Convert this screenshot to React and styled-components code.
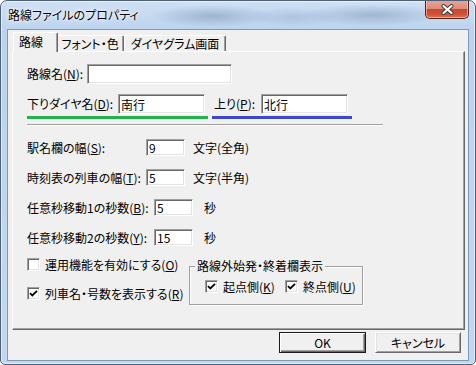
import React from 'react';
import styled, { createGlobalStyle } from 'styled-components';

const Global = createGlobalStyle`
  html, body { margin: 0; padding: 0; background: #ffffff; }
  body {
    width: 476px; height: 365px; overflow: hidden;
    font-family: "Noto Sans CJK JP", "Noto Sans", sans-serif;
    font-size: 12px;
    font-feature-settings: "palt";
    color: #000;
  }
  * { box-sizing: border-box; }
`;

const Window = styled.div`
  width: 476px;
  height: 365px;
  display: flex;
  flex-direction: column;
  border: 1px solid #4e6079;
  border-radius: 7px 7px 5px 5px;
  overflow: hidden;
  background:
    radial-gradient(ellipse 62px 11px at 212px 15px, rgba(70, 100, 140, 0.32), transparent),
    radial-gradient(ellipse 48px 10px at 292px 16px, rgba(90, 120, 160, 0.22), transparent),
    radial-gradient(ellipse 70px 11px at 372px 14px, rgba(70, 100, 140, 0.3), transparent),
    linear-gradient(#cfe0f4, #bcd3ee 30px, #c2d8f1);
  box-shadow: inset 0 0 0 1px rgba(255, 255, 255, 0.55);
`;

const TitleBar = styled.div`
  height: 28px;
  flex: none;
  display: flex;
  align-items: flex-start;
  justify-content: space-between;
  padding-left: 7px;
  padding-right: 6px;
`;

const TitleText = styled.div`
  font-family: "Meiryo UI", "Noto Sans CJK JP", sans-serif;
  font-size: 12px;
  line-height: 14px;
  margin-top: 7px;
  color: #000;
  text-shadow: 0 0 6px #ffffff, 0 0 3px #ffffff, 0 0 1px rgba(255,255,255,0.9);
`;

const CloseButton = styled.div`
  width: 44px;
  height: 19px;
  margin-top: -1px;
  display: flex;
  align-items: center;
  justify-content: center;
  border: 1px solid #5a1f17;
  border-top: none;
  border-radius: 0 0 5px 5px;
  background:
    linear-gradient(#e6a797 0%, #dc8d7a 48%, #c9452f 52%, #cf5238 80%, #e07757 100%);
  box-shadow: inset 0 0 0 1px rgba(255, 220, 210, 0.55);
`;

const Client = styled.div`
  flex: 1;
  margin: 0 6px 3px 6px;
  border: 1px solid #7f98b6;
  background: #f0f0f0;
  display: flex;
  flex-direction: column;
  padding: 2px 3px 0 4px;
`;

const TabStrip = styled.div`
  height: 19px;
  display: flex;
  align-items: flex-end;
  padding-left: 1px;
`;

const Tab = styled.div`
  height: ${p => (p.$active ? 20 : 16)}px;
  width: ${p => p.$w}px;
  margin-bottom: ${p => (p.$active ? -1 : 0)}px;
  margin-right: ${p => (p.$active ? -2 : 0)}px;
  position: relative;
  z-index: ${p => (p.$active ? 1 : 0)};
  background: #f0f0f0;
  border-left: 1px solid #ffffff;
  border-top: 1px solid #ffffff;
  border-right: 1px solid #696969;
  border-radius: 2px 2px 0 0;
  box-shadow: inset -1px 0 0 #a0a0a0;
  display: flex;
  align-items: center;
  justify-content: ${p => (p.$active ? 'flex-start' : 'center')};
  padding-left: ${p => (p.$active ? 5 : 0)}px;
  padding-bottom: ${p => (p.$active ? 2 : 0)}px;
  font-size: 12px;
  line-height: 14px;
  white-space: nowrap;
`;

const Panel = styled.div`
  height: 279px;
  background: #f0f0f0;
  border-top: 1px solid #ffffff;
  border-left: 1px solid #ffffff;
  border-right: 1px solid #696969;
  border-bottom: 1px solid #696969;
  box-shadow: inset -1px -1px 0 #a0a0a0;
  padding: 12px 0 0 14px;
  display: flex;
  flex-direction: column;
`;

const Row = styled.div`
  display: flex;
  align-items: center;
  height: ${p => p.$h || 20}px;
  margin-top: ${p => p.$mt || 0}px;
  padding-left: ${p => p.$pl || 0}px;
`;

const Label = styled.div`
  width: ${p => p.$w}px;
  flex: none;
  font-size: 12px;
  line-height: 14px;
  white-space: nowrap;
`;

const TextBox = styled.input`
  width: ${p => p.$w}px;
  height: ${p => p.$h || 20}px;
  flex: none;
  margin: 0;
  padding: 0 0 0 2px;
  font: inherit;
  font-size: 12px;
  line-height: 14px;
  color: #000;
  background: #ffffff;
  border: 1px solid;
  border-color: #a0a0a0 #ffffff #ffffff #a0a0a0;
  box-shadow: inset 1px 1px 0 #696969, inset -1px -1px 0 #e3e3e3;
  outline: none;
`;

const Unit = styled.div`
  margin-left: ${p => p.$ml}px;
  font-size: 12px;
  line-height: 14px;
  white-space: nowrap;
`;

const NameGroups = styled.div`
  display: flex;
  gap: 4px;
  margin-top: 10px;
`;

const NameGroup = styled.div`
  width: ${p => p.$w}px;
  display: flex;
  flex-direction: column;
`;

const ColorBar = styled.div`
  height: 3px;
  margin-top: 2px;
  background: ${p => p.$color};
`;

const Separator = styled.div`
  width: 356px;
  height: 2px;
  margin-top: 5px;
  border-top: 1px solid #a0a0a0;
  border-bottom: 1px solid #ffffff;
`;

const Bottom = styled.div`
  display: flex;
  align-items: flex-start;
  margin-top: 12px;
`;

const CheckColumn = styled.div`
  width: 162px;
  display: flex;
  flex-direction: column;
  gap: 16px;
`;

const CheckItem = styled.div`
  display: flex;
  align-items: center;
  gap: 5px;
  height: 13px;
  width: ${p => (p.$w ? `${p.$w}px` : 'auto')};
  flex: none;
  font-size: 12px;
  line-height: 14px;
  white-space: nowrap;
`;

const Box = styled.span`
  width: 13px;
  height: 13px;
  flex: none;
  display: flex;
  align-items: center;
  justify-content: center;
  background: #ffffff;
  border: 1px solid;
  border-color: #a0a0a0 #ffffff #ffffff #a0a0a0;
  box-shadow: inset 1px 1px 0 #696969, inset -1px -1px 0 #e3e3e3;
`;

const GroupBox = styled.div`
  width: 174px;
  height: 39px;
  margin-top: 8px;
  border: 1px solid #a0a0a0;
  box-shadow: 1px 1px 0 #ffffff, inset 1px 1px 0 #ffffff;
  display: flex;
  flex-direction: column;
  align-items: flex-start;
`;

const Legend = styled.div`
  margin-top: -8px;
  margin-left: 5px;
  padding: 0 2px;
  background: #f0f0f0;
  font-size: 12px;
  line-height: 14px;
  white-space: nowrap;
`;

const GroupChecks = styled.div`
  display: flex;
  margin-top: 7px;
  padding-left: 15px;
`;

const ButtonRow = styled.div`
  display: flex;
  justify-content: flex-end;
  gap: 9px;
  margin-top: 2px;
  padding-right: 4px;
`;

const Button = styled.div`
  width: ${p => p.$w}px;
  height: 21px;
  display: flex;
  align-items: center;
  justify-content: center;
  font-size: 12px;
  line-height: 14px;
  background: #f0f0f0;
  border: 1px solid;
  border-color: ${p => (p.$default ? '#1b1b1b' : '#ffffff #696969 #696969 #ffffff')};
  box-shadow: ${p =>
    p.$default
      ? 'inset 1px 1px 0 #ffffff, inset -1px -1px 0 #696969, inset -2px -2px 0 #a0a0a0'
      : 'inset 1px 1px 0 #e3e3e3, inset -1px -1px 0 #a0a0a0'};
`;

const Check = () => (
  <svg width="9" height="9" viewBox="0 0 9 9">
    <polyline points="1,4.2 3.3,6.5 8,1.8" fill="none" stroke="#000" strokeWidth="1.8" />
  </svg>
);

const CheckBox = ({ checked, children, w }) => (
  <CheckItem $w={w}>
    <Box>{checked && <Check />}</Box>
    <span>{children}</span>
  </CheckItem>
);

export default function App() {
  return (
    <>
      <Global />
      <Window>
        <TitleBar>
          <TitleText>路線ファイルのプロパティ</TitleText>
          <CloseButton>
            <svg width="13" height="11" viewBox="0 0 13 11">
              <path d="M2.5 2 L10.5 9 M10.5 2 L2.5 9" stroke="#3a3a3a" strokeWidth="4" strokeLinecap="round" />
              <path d="M2.5 2 L10.5 9 M10.5 2 L2.5 9" stroke="#ffffff" strokeWidth="2.2" strokeLinecap="round" />
            </svg>
          </CloseButton>
        </TitleBar>
        <Client>
          <TabStrip>
            <Tab $active $w={45}>路線</Tab>
            <Tab $w={68}>フォント・色</Tab>
            <Tab $w={102}>ダイヤグラム画面</Tab>
          </TabStrip>
          <Panel>
            <Row>
              <Label $w={60}>路線名(<u>N</u>):</Label>
              <TextBox $w={145} readOnly value="" />
            </Row>
            <NameGroups>
              <NameGroup $w={181}>
                <Row>
                  <Label $w={91}>下りダイヤ名(<u>D</u>):</Label>
                  <TextBox $w={87} readOnly value="南行" />
                </Row>
                <ColorBar $color="#22b14c" />
              </NameGroup>
              <NameGroup $w={140}>
                <Row $pl={2}>
                  <Label $w={47}>上り(<u>P</u>):</Label>
                  <TextBox $w={87} readOnly value="北行" />
                </Row>
                <ColorBar $color="#3f48cc" />
              </NameGroup>
            </NameGroups>
            <Separator />
            <Row $h={17} $mt={13}>
              <Label $w={119}>駅名欄の幅(<u>S</u>):</Label>
              <TextBox $w={39} $h={17} readOnly value="9" />
              <Unit $ml={8}>文字(全角)</Unit>
            </Row>
            <Row $h={17} $mt={13}>
              <Label $w={119}>時刻表の列車の幅(<u>T</u>):</Label>
              <TextBox $w={39} $h={17} readOnly value="5" />
              <Unit $ml={8}>文字(半角)</Unit>
            </Row>
            <Row $h={17} $mt={13}>
              <Label $w={127}>任意秒移動1の秒数(<u>B</u>):</Label>
              <TextBox $w={39} $h={17} readOnly value="5" />
              <Unit $ml={11}>秒</Unit>
            </Row>
            <Row $h={17} $mt={13}>
              <Label $w={127}>任意秒移動2の秒数(<u>Y</u>):</Label>
              <TextBox $w={39} $h={17} readOnly value="15" />
              <Unit $ml={11}>秒</Unit>
            </Row>
            <Bottom>
              <CheckColumn>
                <CheckBox>運用機能を有効にする(<u>O</u>)</CheckBox>
                <CheckBox checked>列車名・号数を表示する(<u>R</u>)</CheckBox>
              </CheckColumn>
              <GroupBox>
                <Legend>路線外始発・終着欄表示</Legend>
                <GroupChecks>
                  <CheckBox checked w={80}>起点側(<u>K</u>)</CheckBox>
                  <CheckBox checked>終点側(<u>U</u>)</CheckBox>
                </GroupChecks>
              </GroupBox>
            </Bottom>
          </Panel>
          <ButtonRow>
            <Button $default $w={87}>OK</Button>
            <Button $w={86}>キャンセル</Button>
          </ButtonRow>
        </Client>
      </Window>
    </>
  );
}
